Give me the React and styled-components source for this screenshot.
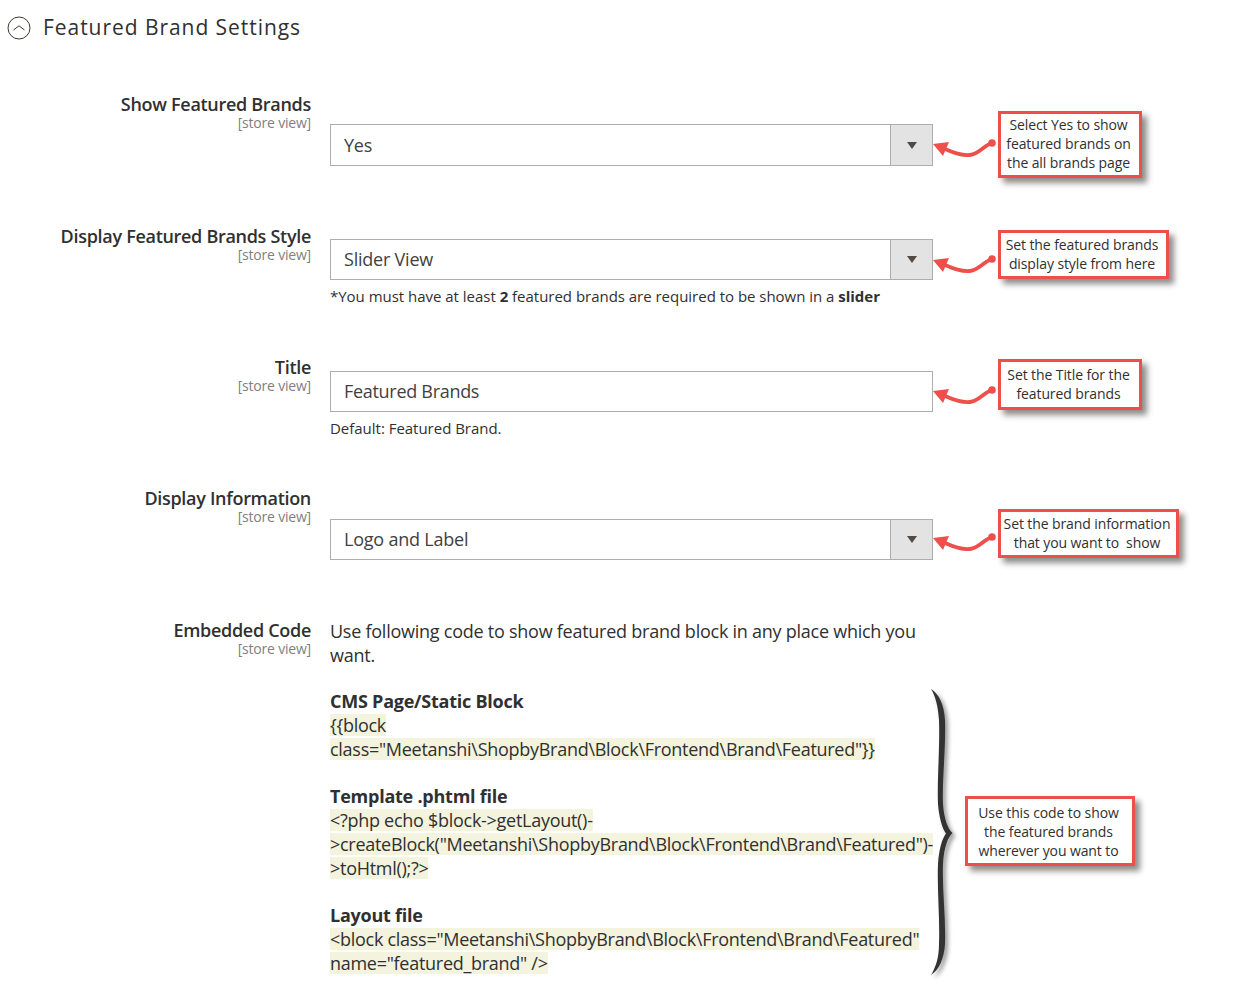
import React from "react"
import styled, { createGlobalStyle } from "styled-components"

const GlobalStyle = createGlobalStyle`
    html, body {
        margin:0;
        padding:0;
        background:#fff;
    }
    body {
        font-family:"Open Sans", "Liberation Sans", sans-serif;
        color:#303030;
    }
`;

function Arrow({ offset }) {
    return (
        <ArrowSvg viewBox="0 0 66 30" width="66" height="30" $offset={offset}>
            <path d="M59 12 C50 15 46 23 37 24 C29 25 21 22 12 18" fill="none" stroke="#ef4f4b" strokeWidth="3.8" strokeLinecap="round" />
            <circle cx="59" cy="12" r="3.8" fill="#ef4f4b" />
            <path d="M0 13 L16 11 L10 25 Z" fill="#ef4f4b" />
        </ArrowSvg>
    )
}

function Note({ top, offset, boxWidth, padTop, padBottom, children }) {
    return (
        <NoteRow $top={top}>
            <Arrow offset={offset} />
            <NoteBox $width={boxWidth} $padTop={padTop} $padBottom={padBottom}>{children}</NoteBox>
        </NoteRow>
    )
}

function Select({ value, height }) {
    return (
        <SelectBox $height={height}>
            <SelectValue $height={height}>{value}</SelectValue>
            <SelectButton><Caret /></SelectButton>
        </SelectBox>
    )
}

function Label({ text }) {
    return (
        <LabelCell>
            <LabelText>{text}</LabelText>
            <Scope>[store view]</Scope>
        </LabelCell>
    )
}

export default function App() {
    return (
        <Page>
            <GlobalStyle />
            <Heading>
                <Toggle>
                    <svg viewBox="0 0 24 24" width="24" height="24">
                        <circle cx="12" cy="12" r="11" fill="none" stroke="#41362f" strokeWidth="1" />
                        <path d="M6.5 14 L12 9.8 L17.5 14" fill="none" stroke="#41362f" strokeWidth="1" />
                    </svg>
                </Toggle>
                <Title>Featured Brand Settings</Title>
            </Heading>

            <Row $height={132} $top={46}>
                <Label text="Show Featured Brands" />
                <Field $top={29}>
                    <Select value="Yes" height={42} />
                </Field>
                <Note top={16} offset={32} boxWidth={144} padTop={1} padBottom={3}>
                    Select Yes to show<br />featured brands on<br />the all brands page
                </Note>
            </Row>

            <Row $height={131}>
                <Label text="Display Featured Brands Style" />
                <Field $top={12}>
                    <Select value="Slider View" height={41} />
                    <Hint>*You must have at least <b>2</b> featured brands are required to be shown in a <b>slider</b></Hint>
                </Field>
                <Note top={3} offset={29} boxWidth={171} padTop={2} padBottom={3}>
                    Set the featured brands<br />display style from here
                </Note>
            </Row>

            <Row $height={131}>
                <Label text="Title" />
                <Field $top={13}>
                    <TextInput>Featured Brands</TextInput>
                    <Hint>Default: Featured Brand.</Hint>
                </Field>
                <Note top={1} offset={31} boxWidth={144} padTop={3} padBottom={4}>
                    Set the Title for the<br />featured brands
                </Note>
            </Row>

            <Row $height={132}>
                <Label text="Display Information" />
                <Field $top={30}>
                    <Select value="Logo and Label" height={41} />
                </Field>
                <Note top={20} offset={28} boxWidth={181} padTop={2} padBottom={3}>
                    Set the brand information<br />that you want to&nbsp; show
                </Note>
            </Row>

            <Row>
                <Label text="Embedded Code" />
                <Field $top={0}>
                    <Intro>Use following code to show featured brand block in any place which you want.</Intro>
                    <CodeTitle>CMS Page/Static Block</CodeTitle>
                    <CodeLine><Mark>{"{{block"}</Mark></CodeLine>
                    <CodeLine><Mark>{'class="Meetanshi\\ShopbyBrand\\Block\\Frontend\\Brand\\Featured"}}'}</Mark></CodeLine>
                    <CodeTitle>Template .phtml file</CodeTitle>
                    <CodeLine><Mark>{"<?php echo $block->getLayout()-"}</Mark></CodeLine>
                    <CodeLine><Mark>{'>createBlock("Meetanshi\\ShopbyBrand\\Block\\Frontend\\Brand\\Featured")-'}</Mark></CodeLine>
                    <CodeLine><Mark>{">toHtml();?>"}</Mark></CodeLine>
                    <CodeTitle>Layout file</CodeTitle>
                    <CodeLine><Mark>{'<block class="Meetanshi\\ShopbyBrand\\Block\\Frontend\\Brand\\Featured"'}</Mark></CodeLine>
                    <CodeLine><Mark>{'name="featured_brand" />'}</Mark></CodeLine>
                </Field>
                <BraceColumn>
                    <BraceSvg viewBox="0 0 30 288" width="30" height="288">
                        <path d="M0 0 C8 5 13 15 14 31 C15 60 11 90 12 115 C13 130 17 140 21.5 144 C17 148 13 158 12 175 C11 200 15 230 14 255 C13 270 8 281 0 286 C5 278 8 268 8 255 C9 230 6 200 7 175 C8 160 11 150 15 144.5 C11 139 8 128 7 115 C6 90 9 60 8 31 C7 18 5 8 0 0 Z" fill="#333" />
                    </BraceSvg>
                    <BraceNote>Use this code to show<br />the featured brands<br />wherever you want to</BraceNote>
                </BraceColumn>
            </Row>
        </Page>
    )
}

const Page = styled.div`
    width:1246px;
    height:987px;
    overflow:hidden;
    background:#fff;
`;

const Heading = styled.div`
    height:42px;
    padding:7px 0 0 7px;
    display:flex;
    align-items:center;
    gap:12px;
`;

const Toggle = styled.div`
    width:24px;
    height:24px;
    display:flex;
`;

const Title = styled.div`
    font-size:21px;
    font-weight:500;
    letter-spacing:0.95px;
    color:#303030;
    line-height:28px;
    padding-bottom:2px;
`;

const Row = styled.div`
    display:grid;
    grid-template-columns:311px 622px 1fr;
    align-items:start;
    height:${p => p.$height ? `${p.$height}px` : "auto"};
    margin-top:${p => p.$top || 0}px;
`;

const LabelCell = styled.div`
    text-align:right;
`;

const LabelText = styled.div`
    font-size:18px;
    font-weight:600;
    line-height:19px;
    letter-spacing:-0.3px;
    color:#303030;
`;

const Scope = styled.div`
    font-size:14px;
    line-height:17px;
    letter-spacing:-0.2px;
    color:#808080;
`;

const Field = styled.div`
    padding:${p => p.$top}px 0 0 19px;
    min-width:0;
`;

const SelectBox = styled.div`
    height:${p => p.$height}px;
    box-sizing:border-box;
    border:1px solid #adadad;
    display:flex;
    align-items:stretch;
    background:#fff;
`;

const SelectValue = styled.div`
    flex:1;
    padding-left:13px;
    font-size:18px;
    line-height:${p => p.$height - 2}px;
    color:#414141;
    letter-spacing:-0.22px;
`;

const SelectButton = styled.div`
    width:41px;
    background:#e3e3e3;
    border-left:1px solid #adadad;
    display:flex;
    align-items:center;
    justify-content:center;
`;

const Caret = styled.div`
    width:0;
    height:0;
    border-left:5.5px solid transparent;
    border-right:5.5px solid transparent;
    border-top:7px solid #514943;
`;

const TextInput = styled.div`
    height:41px;
    box-sizing:border-box;
    border:1px solid #adadad;
    padding-left:13px;
    font-size:18px;
    line-height:39px;
    letter-spacing:-0.3px;
    color:#414141;
`;

const Hint = styled.div`
    font-size:15px;
    line-height:20px;
    margin-top:6px;
    letter-spacing:-0.02px;
    color:#303030;
`;

const Intro = styled.div`
    font-size:18px;
    line-height:24px;
    letter-spacing:-0.25px;
    margin:-2px 0 22px;
`;

const CodeTitle = styled.div`
    font-size:18px;
    font-weight:700;
    line-height:24px;
    letter-spacing:-0.24px;
    margin-top:23px;
    &:nth-child(2) {
        margin-top:0;
    }
`;

const CodeLine = styled.div`
    height:24px;
    display:flex;
    align-items:center;
    font-size:18px;
    letter-spacing:-0.28px;
    white-space:nowrap;
`;

const Mark = styled.span`
    background:#f3f3de;
    line-height:22px;
`;

const NoteRow = styled.div`
    display:flex;
    align-items:flex-start;
    margin-top:${p => p.$top}px;
`;

const ArrowSvg = styled.svg`
    flex:none;
    margin:${p => p.$offset - 12}px -1px 0 0;
`;

const NoteBox = styled.div`
    width:${p => p.$width}px;
    box-sizing:border-box;
    border:3px solid #ef4f4b;
    background:#fff;
    box-shadow:5px 5px 6px rgba(0,0,0,.45);
    text-align:center;
    font-size:14px;
    line-height:19px;
    letter-spacing:-0.1px;
    padding:${p => p.$padTop}px 4px ${p => p.$padBottom}px 1px;
    color:#303030;
    flex:none;
    white-space:nowrap;
`;

const BraceColumn = styled.div`
    display:flex;
    align-items:flex-start;
    padding-top:68px;
`;

const BraceSvg = styled.svg`
    flex:none;
    margin-left:-2px;
    filter:drop-shadow(3px 3px 2px rgba(0,0,0,.4));
`;

const BraceNote = styled.div`
    width:170px;
    box-sizing:border-box;
    border:3px solid #ef4f4b;
    background:#fff;
    box-shadow:5px 5px 6px rgba(0,0,0,.45);
    text-align:center;
    font-size:14px;
    line-height:19px;
    letter-spacing:-0.1px;
    padding:4px 4px 3px 1px;
    color:#303030;
    margin:107px 0 0 4px;
    flex:none;
`;
